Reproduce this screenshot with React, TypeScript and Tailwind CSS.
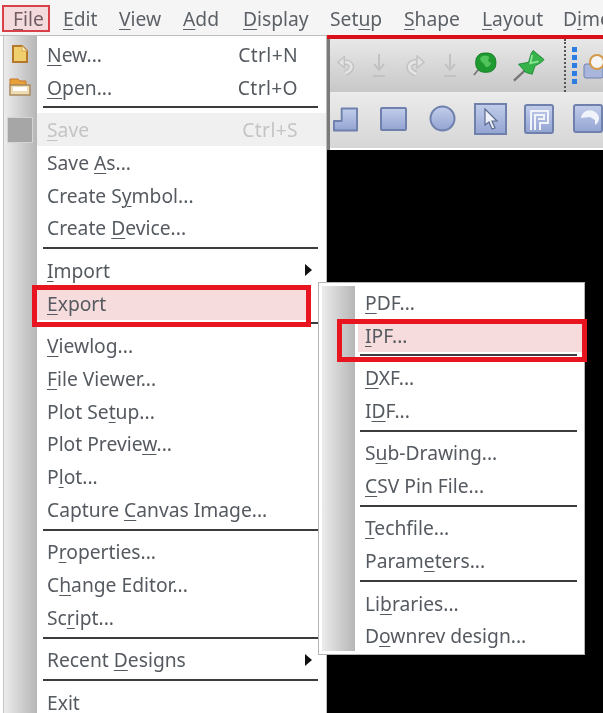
import React from "react";

type Row = { t?: React.ReactNode; sep?: boolean; shortcut?: string; arrow?: boolean; disabled?: boolean; hi?: boolean; icon?: React.ReactNode };

const U = ({ children }: { children: React.ReactNode }) => <span className="underline decoration-1 underline-offset-[3px]">{children}</span>;

const NewIcon = () => (
  <svg width="16" height="20" viewBox="0 0 16 20"><path d="M1 2h9l5 5v11H1z" fill="#f0cf6e" stroke="#b5772a" strokeWidth="2" /><path d="M10 2v5h5" fill="#fdf0bb" stroke="#d9a94a" /></svg>
);
const OpenIcon = () => (
  <svg width="22" height="18" viewBox="0 0 22 18"><path d="M1 5V1h8l2 2h6v4H1z" fill="#e8a23a" stroke="#c9772a" /><path d="M1 7h20v10H1z" fill="#efdcb4" stroke="#a98a5c" strokeWidth="1.5" /><path d="M4 9h14v4H4z" fill="#fff" /></svg>
);

const mainRows: Row[] = [
  { t: <><U>N</U>ew...</>, shortcut: "Ctrl+N", icon: <NewIcon /> },
  { t: <><U>O</U>pen...</>, shortcut: "Ctrl+O", icon: <OpenIcon /> },
  { sep: true },
  { t: <><U>S</U>ave</>, shortcut: "Ctrl+S", disabled: true, icon: <div className="w-[26px] h-[26px] bg-[#a6a6a6] border border-[#d4d4d4]" /> },
  { t: <>Save <U>A</U>s...</> },
  { t: <>Create S<U>y</U>mbol...</> },
  { t: <>Create <U>D</U>evice...</> },
  { sep: true },
  { t: <><U>I</U>mport</>, arrow: true },
  { t: <><U>E</U>xport</>, hi: true },
  { sep: true },
  { t: <><U>V</U>iewlog...</> },
  { t: <><U>F</U>ile Viewer...</> },
  { t: <>Plot Se<U>t</U>up...</> },
  { t: <>Plot Previe<U>w</U>...</> },
  { t: <>P<U>l</U>ot...</> },
  { t: <>Capture <U>C</U>anvas Image...</> },
  { sep: true },
  { t: <>P<U>r</U>operties...</> },
  { t: <>C<U>h</U>ange Editor...</> },
  { t: <>Sc<U>r</U>ipt...</> },
  { sep: true },
  { t: <>Recent <U>D</U>esigns</>, arrow: true },
  { sep: true },
  { t: <>E<U>x</U>it</> },
];

const subRows: Row[] = [
  { t: <><U>P</U>DF...</> },
  { t: <><U>I</U>PF...</>, hi: true },
  { sep: true },
  { t: <><U>D</U>XF...</> },
  { t: <>I<U>D</U>F...</> },
  { sep: true },
  { t: <>S<U>u</U>b-Drawing...</> },
  { t: <><U>C</U>SV Pin File...</> },
  { sep: true },
  { t: <><U>T</U>echfile...</> },
  { t: <>Param<U>e</U>ters...</> },
  { sep: true },
  { t: <>Li<U>b</U>raries...</> },
  { t: <>D<U>o</U>wnrev design...</> },
];

function Rows({ rows, main }: { rows: Row[]; main: boolean }) {
  return (
    <>
      {rows.map((r, i) =>
        r.sep ? (
          <div key={i} className={`h-[9.6px] flex items-center pb-[2px] ${main ? "pl-[40px] pr-[8px]" : "pl-[41px] pr-[7px]"}`}>
            <div className="h-[2px] w-full bg-[#3c3c3c]" />
          </div>
        ) : (
          <div key={i} className={`relative h-[32.8px] flex items-center ${main ? "pl-[44px] pr-[28px]" : "pl-[46px]"} ${r.disabled ? "text-[#c4c4c4]" : "text-[#555a60]"}`}>
            {r.disabled && <div className="absolute left-[34px] right-0 top-0 bottom-0 bg-[#f0f0f0]" />}
            {r.hi && <div className={`absolute top-0 bottom-0 bg-[#f6dcdc] ${main ? "left-[34px] right-[20px]" : "left-[39px] right-0"}`} />}
            {r.icon && <div className="absolute left-0 w-[34px] flex justify-center items-center">{r.icon}</div>}
            <span className="relative">{r.t}</span>
            {r.shortcut && <span className="relative ml-auto tracking-[0.35px]">{r.shortcut}</span>}
            {r.arrow && <svg className="absolute right-[14px]" width="7" height="12" viewBox="0 0 7 12"><path d="M0 0l7 6-7 6z" fill="#111" /></svg>}
          </div>
        )
      )}
    </>
  );
}

const G = "#c2c2c2";
const Undo = () => (
  <svg width="20" height="21" viewBox="0 0 20 21">
    <path d="M7 7C16 6 20 14 9 19" fill="none" stroke={G} strokeWidth="6" />
    <path d="M7 7C16 6 20 14 9 19" fill="none" stroke="#e4e4e4" strokeWidth="3" />
    <path d="M1 7l7-6v12z" fill="#e4e4e4" stroke={G} strokeWidth="1.5" />
  </svg>
);
const Redo = () => (
  <svg width="20" height="21" viewBox="0 0 20 21">
    <path d="M13 7C4 6 0 14 11 19" fill="none" stroke={G} strokeWidth="6" />
    <path d="M13 7C4 6 0 14 11 19" fill="none" stroke="#e4e4e4" strokeWidth="3" />
    <path d="M19 7l-7-6v12z" fill="#e4e4e4" stroke={G} strokeWidth="1.5" />
  </svg>
);
const Down = () => <svg width="16" height="25" viewBox="0 0 16 25"><path d="M8 1v14M3 11l5 6 5-6M2 23h12" fill="none" stroke={G} strokeWidth="2" /></svg>;

const Btn = ({ children, w = 29, h = 29 }: { children: React.ReactNode; w?: number; h?: number }) => (
  <svg width={w} height={h} viewBox={`0 0 ${w} ${h}`}>
    <defs>
      <linearGradient id="blueFill" x1="0" y1="0" x2="0" y2="1">
        <stop offset="0" stopColor="#c2cdea" />
        <stop offset="1" stopColor="#93a4d2" />
      </linearGradient>
    </defs>
    {children}
  </svg>
);
const blue = { fill: "url(#blueFill)", stroke: "#6f80ad", strokeWidth: 2 };

const bar: [React.ReactNode, string][] = [
  [<><U>F</U>ile</>, "w-[50px]"],
  [<><U>E</U>dit</>, "w-[56px]"],
  [<><U>V</U>iew</>, "w-[64px]"],
  [<><U>A</U>dd</>, "w-[60px]"],
  [<><U>D</U>isplay</>, "w-[87px]"],
  [<>Set<U>u</U>p</>, "w-[74px]"],
  [<><U>S</U>hape</>, "w-[78px]"],
  [<><U>L</U>ayout</>, "w-[81px]"],
  [<>D<U>i</U>mension</>, "w-[95px]"],
];

export default function App() {
  return (
    <div className="relative w-[603px] h-[713px] overflow-hidden bg-black text-[19.25px] leading-none blur-[0.5px]" style={{ fontFamily: '"Noto Sans", "Open Sans", sans-serif' }}>
      <div className="flex flex-col h-full">
        <div className="h-[35px] shrink-0 bg-[#f5f5f5] flex items-center pl-[13px] text-[#5c6167] whitespace-nowrap overflow-hidden pt-[3px]">
          {bar.map(([t, w], i) => <span key={i} className={`shrink-0 ${w}`}>{t}</span>)}
        </div>
        <div className="h-[4px] shrink-0 bg-[#d8101a]" />
        <div className="h-[53px] shrink-0 flex items-center pl-[337px] bg-gradient-to-b from-[#e8e8e8] to-[#c8c8c8]">
          <Undo />
          <div className="ml-[16px]"><Down /></div>
          <div className="ml-[18px]"><Redo /></div>
          <div className="ml-[17px]"><Down /></div>
          <svg className="ml-[15px] -mt-[3px]" width="26" height="26" viewBox="0 0 26 26"><path d="M6 19L1 25" stroke="#777" strokeWidth="2" /><rect x="3" y="1" width="22" height="21" rx="9" fill="#1f9a30" stroke="#157a24" /><path d="M8 6c3-3 8-3 10 0-2 2-2 5 2 6-2 4-5 6-7 3-1-4-6-4-5-9z" fill="#52c45c" /></svg>
          <svg className="ml-[16px]" width="36" height="34" viewBox="0 0 36 34"><path d="M1 33l13-12" stroke="#777" strokeWidth="2.5" /><path d="M6 15l11-2 3-10 2-3 12 10-3 3-7 4-3 9-7-2z" fill="#35b34a" stroke="#1f8a35" /><path d="M21 5l-2 9 9-2" fill="none" stroke="#8be496" strokeWidth="2" /></svg>
          <div className="ml-[18px] h-full w-[2px] border-l-2 border-dotted border-[#555]" />
          <div className="ml-[6px] flex flex-col gap-[3px]">
            <div className="w-[5px] h-[5px] bg-[#2f7de0]" />
            <div className="w-[5px] h-[5px] bg-[#2f7de0]" />
            <div className="w-[5px] h-[5px] bg-[#2f7de0]" />
            <div className="w-[5px] h-[5px] bg-[#2f7de0]" />
            <div className="w-[5px] h-[5px] bg-[#2f7de0]" />
          </div>
          <svg className="ml-[6px] shrink-0" width="20" height="26" viewBox="0 0 20 26"><rect x="1" y="11" width="19" height="14" rx="2" fill="#a9b6dc" stroke="#6f80ad" /><circle cx="14" cy="9" r="7" fill="#f5f5f5" stroke="#d49a4a" strokeWidth="2" /></svg>
        </div>
        <div className="h-[58px] shrink-0 flex items-center pl-[333px] pb-[3px] bg-gradient-to-b from-[#ebebeb] to-[#d6d6d6] border-b-2 border-white">
          <Btn w={26} h={26}><path d="M1 15h8V2h16v23H1z" {...blue} strokeLinejoin="round" /></Btn>
          <div className="ml-[22px]"><Btn w={27} h={24}><rect x="1" y="1" width="25" height="22" rx="1" {...blue} /></Btn></div>
          <div className="ml-[22px]"><Btn w={27} h={27}><circle cx="13.5" cy="13.5" r="12" {...blue} /></Btn></div>
          <div className="ml-[18px]"><Btn w={33} h={32}><rect x="1" y="1" width="31" height="30" {...blue} /><path d="M11 6v16l4-3 3 7 3-1-3-7h5z" fill="#eef1f8" stroke="#5d6a8f" strokeWidth="1.2" /></Btn></div>
          <div className="ml-[17px]"><Btn w={30} h={30}><rect x="1" y="1" width="28" height="28" rx="2" {...blue} /><path d="M7 26V7h17v12h-8v7M11 26V11h9v4h-6" fill="none" stroke="#f1f3fa" strokeWidth="2" /></Btn></div>
          <div className="ml-[19px]"><Btn w={30} h={29}><rect x="1" y="1" width="28" height="27" rx="2" {...blue} /><path d="M8 14a9 8 0 1 1 14 7v-5l-5-3z" fill="#f1f3fa" /></Btn></div>
        </div>
        <div className="flex-1 bg-black" />
      </div>

      {/* Menu drop shadow on the toolbars */}
      <div className="absolute left-[327px] top-[39px] w-[3px] h-[111px] bg-[#7a7a7a]" />

      {/* File red box */}
      <div className="absolute left-[2px] top-[5px] w-[48px] h-[27px] border-2 border-[#d8404a] bg-[#e84a5a]/15" />

      {/* File menu */}
      <div className="absolute left-0 top-[35px] w-[327px] h-[690px] bg-white border-t border-r border-[#bdbdbd] pt-[2px]">
        <div className="absolute left-[3px] top-0 bottom-0 w-[34px] border-l border-[#c4c4c4] bg-gradient-to-r from-[#ececec] to-[#b6b6b6]" />
        <div className="relative whitespace-nowrap pl-[3px]"><Rows rows={mainRows} main /></div>
      </div>

      {/* Export submenu */}
      <div className="absolute left-[318px] top-[282px] w-[267px] h-[373px] bg-white border border-[#b5b5b5] pt-[3px]">
        <div className="absolute left-[3px] top-[3px] bottom-[3px] w-[33px] bg-gradient-to-r from-[#ececec] to-[#b6b6b6]" />
        <div className="relative whitespace-nowrap"><Rows rows={subRows} main={false} /></div>
      </div>

      {/* Annotation boxes */}
      <div className="absolute left-[32px] top-[285px] w-[279px] h-[42px] border-[5px] border-[#e8141f]" />
      <div className="absolute left-[337px] top-[319px] w-[250px] h-[43px] border-[5px] border-[#e8141f]" />
    </div>
  );
}
